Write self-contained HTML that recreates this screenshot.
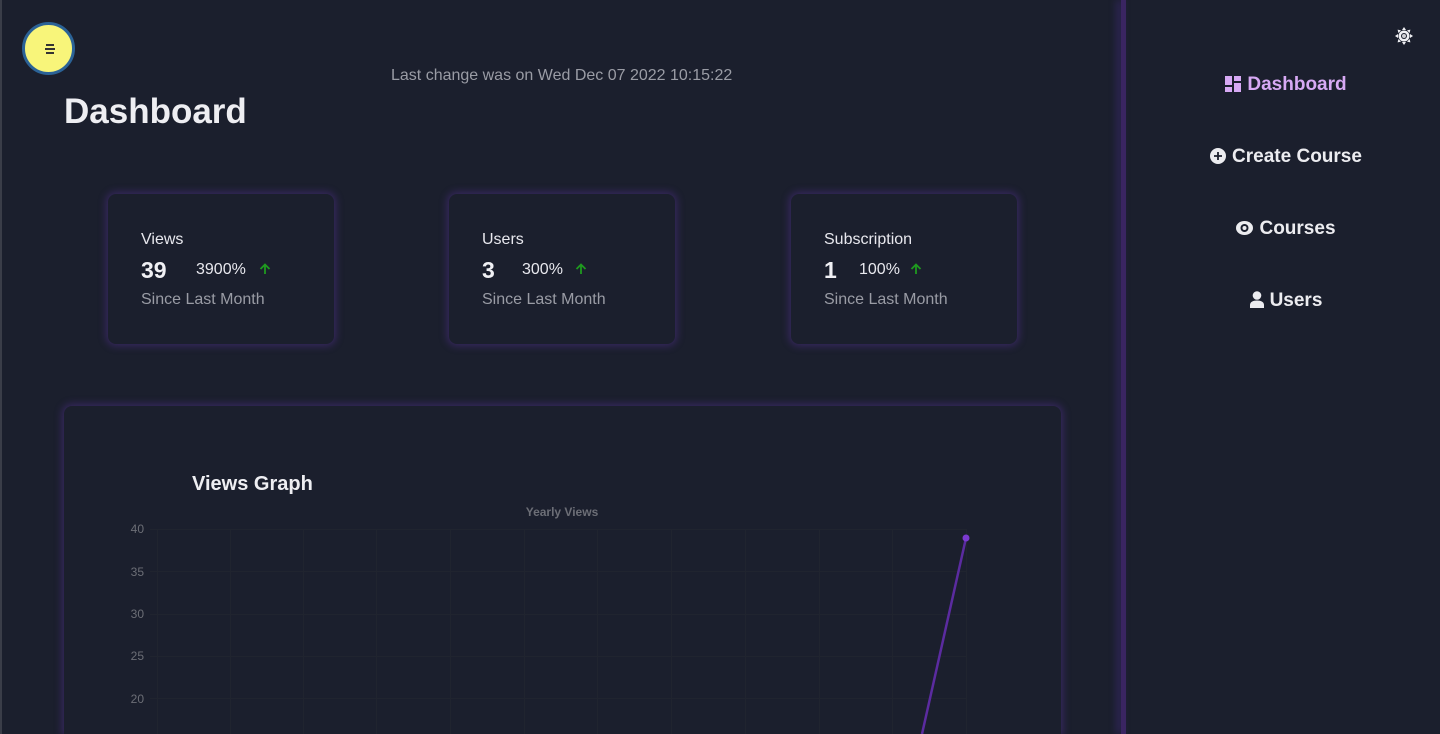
<!DOCTYPE html>
<html style="width:1440px;height:734px;overflow:hidden"><head><meta charset="utf-8"><style>
*{box-sizing:border-box;margin:0;padding:0}
body{width:1440px;height:734px;overflow:hidden;background:#1b1f2d;font-family:"Liberation Sans",sans-serif;position:relative;color:#e8e8ee}
.abs{position:absolute}
.lb{left:0;top:0;width:2px;height:734px;background:#3a3d48}
.menu{left:22px;top:22px;width:53px;height:53px;border-radius:50%;background:#f8f57a;border:3px solid #2b6296}
.menu i{position:absolute;left:20px;width:10px;height:1.5px;background:#333}
.last{left:391px;top:67px;font-size:16px;color:#9a9ca5}
h1{position:absolute;left:64px;top:92px;font-size:35px;font-weight:bold;color:#eeeef2}
.card{width:226px;height:150px;top:194px;border-radius:8px;background:#1b1f2d;box-shadow:0 0 8px 2px rgba(90,50,160,.45)}
.card .t{position:absolute;left:33px;top:37px;font-size:16px;color:#e8e8ee}
.card .n{position:absolute;left:33px;top:63px;font-size:23px;font-weight:bold;color:#f0f0f4}
.card .p{position:absolute;top:67px;font-size:16px;color:#e8e8ee}
.card svg{position:absolute;top:69px}
.card .s{position:absolute;left:33px;top:97px;font-size:16px;color:#9a9ca5}
.big{left:64px;top:406px;width:997px;height:328px;border-radius:8px 8px 0 0;box-shadow:0 0 8px 2px rgba(90,50,160,.45)}
.side{left:1121px;top:0;width:5px;height:734px;background:#3a2562;box-shadow:-4px 0 8px rgba(90,50,180,.4)}
.nav{left:1126px;width:314px;text-align:center;font-size:19px;font-weight:bold;color:#ececf0;padding-left:6px}
.nav svg{vertical-align:-2px;margin-right:6px}
</style></head><body>
<div class="abs lb"></div>
<div class="abs menu"><i style="top:19px;width:8px;left:21px"></i><i style="top:23px"></i><i style="top:27px;width:8px;left:21px"></i></div>
<div class="abs last">Last change was on Wed Dec 07 2022 10:15:22</div>
<h1>Dashboard</h1>

<div class="abs card" style="left:108px"><div class="t">Views</div><div class="n">39</div><div class="p" style="left:88px">3900%</div><svg style="left:151px" width="12" height="12" viewBox="0 0 12 12"><path d="M6 11V1.5M1.5 6L6 1.5 10.5 6" stroke="#1f9a1f" stroke-width="1.8" fill="none"/></svg><div class="s">Since Last Month</div></div>
<div class="abs card" style="left:449px"><div class="t">Users</div><div class="n">3</div><div class="p" style="left:73px">300%</div><svg style="left:126px" width="12" height="12" viewBox="0 0 12 12"><path d="M6 11V1.5M1.5 6L6 1.5 10.5 6" stroke="#1f9a1f" stroke-width="1.8" fill="none"/></svg><div class="s">Since Last Month</div></div>
<div class="abs card" style="left:791px"><div class="t">Subscription</div><div class="n">1</div><div class="p" style="left:68px">100%</div><svg style="left:119px" width="12" height="12" viewBox="0 0 12 12"><path d="M6 11V1.5M1.5 6L6 1.5 10.5 6" stroke="#1f9a1f" stroke-width="1.8" fill="none"/></svg><div class="s">Since Last Month</div></div>

<div class="abs big"></div>
<div class="abs" style="left:192px;top:473px;font-size:20px;font-weight:bold;color:#eeeef2">Views Graph</div>
<svg class="abs" style="left:0;top:0" width="1100" height="734">
<text x="562" y="516" font-size="12" font-weight="bold" fill="#6c6e76" text-anchor="middle" font-family="Liberation Sans">Yearly Views</text>
<g fill="#6c6e76" font-size="12" font-family="Liberation Sans" text-anchor="end">
<text x="144" y="533">40</text><text x="144" y="576">35</text><text x="144" y="618">30</text><text x="144" y="660">25</text><text x="144" y="703">20</text></g>
<g stroke="#20242f" stroke-width="1">
<line x1="150" y1="529.5" x2="966" y2="529.5"/><line x1="150" y1="571.5" x2="966" y2="571.5"/><line x1="150" y1="614.5" x2="966" y2="614.5"/><line x1="150" y1="656.5" x2="966" y2="656.5"/><line x1="150" y1="698.5" x2="966" y2="698.5"/>
<line x1="157.5" y1="529" x2="157.5" y2="734"/><line x1="230.5" y1="529" x2="230.5" y2="734"/><line x1="303.5" y1="529" x2="303.5" y2="734"/><line x1="376.5" y1="529" x2="376.5" y2="734"/><line x1="450.5" y1="529" x2="450.5" y2="734"/><line x1="524.5" y1="529" x2="524.5" y2="734"/><line x1="597.5" y1="529" x2="597.5" y2="734"/><line x1="671.5" y1="529" x2="671.5" y2="734"/><line x1="745.5" y1="529" x2="745.5" y2="734"/><line x1="819.5" y1="529" x2="819.5" y2="734"/><line x1="892.5" y1="529" x2="892.5" y2="734"/><line x1="966.5" y1="529" x2="966.5" y2="734"/>
</g>
<line x1="966" y1="538" x2="922" y2="734" stroke="#5b2ba0" stroke-width="2.5"/>
<circle cx="966" cy="538" r="3.5" fill="#7b3ad0"/>
</svg>

<div class="abs side"></div>
<svg class="abs" style="left:1395px;top:27px" width="18" height="18" viewBox="0 0 18 18"><g fill="#f0f0f4"><circle cx="9" cy="9" r="5.5"/><path d="M9 0l2 3h-4zM9 18l2-3h-4zM0 9l3 2v-4zM18 9l-3 2v-4zM2.6 2.6l3.4 .8-2.6 2.6zM15.4 15.4l-3.4-.8 2.6-2.6zM15.4 2.6l-.8 3.4-2.6-2.6zM2.6 15.4l.8-3.4 2.6 2.6z"/></g><circle cx="9" cy="9" r="3" fill="#1b1f2d"/><circle cx="9" cy="9" r="2" fill="#cfcfd4"/></svg>

<div class="abs nav" style="top:74px;color:#d7a9f4"><svg width="16" height="16" viewBox="0 0 16 16" fill="#d7a9f4"><rect x="0" y="0" width="7" height="9"/><rect x="9" y="0" width="7" height="5"/><rect x="0" y="11" width="7" height="5"/><rect x="9" y="7" width="7" height="9"/></svg>Dashboard</div>
<div class="abs nav" style="top:146px"><svg width="16" height="16" viewBox="0 0 16 16"><circle cx="8" cy="8" r="8" fill="#ececf0"/><path d="M8 4v8M4 8h8" stroke="#1b1f2d" stroke-width="1.8"/></svg>Create Course</div>
<div class="abs nav" style="top:218px"><svg width="17" height="16" viewBox="0 0 17 16"><ellipse cx="8.5" cy="8" rx="8.5" ry="7" fill="#ececf0"/><circle cx="8.5" cy="8" r="4" fill="#1b1f2d"/><circle cx="8.5" cy="8" r="2" fill="#ececf0"/></svg>Courses</div>
<div class="abs nav" style="top:290px"><svg width="14" height="17" viewBox="0 0 14 17" fill="#ececf0"><circle cx="7" cy="4.5" r="4.3"/><path d="M0 17v-3c0-3 3-4.5 7-4.5s7 1.5 7 4.5v3z"/></svg>Users</div>
</body></html>
